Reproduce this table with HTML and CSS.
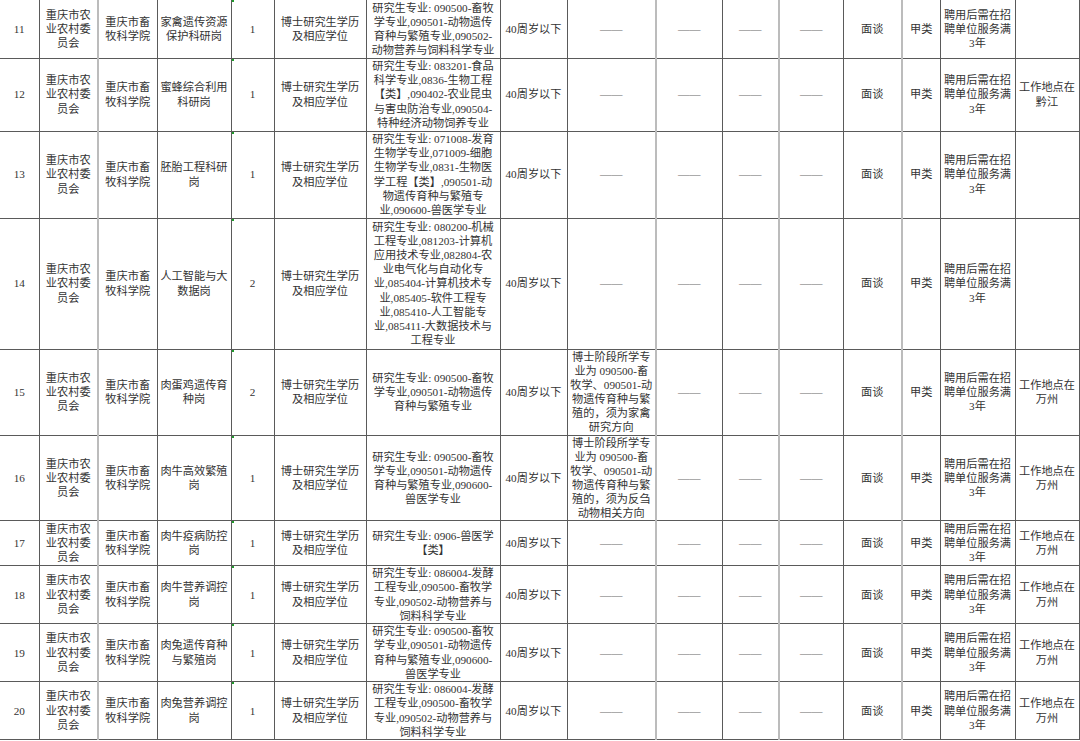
FILE: index.html
```html
<!DOCTYPE html>
<html lang="zh-CN">
<head>
<meta charset="utf-8">
<title>岗位表</title>
<link rel="stylesheet" href="styles.css">
</head>
<body>
<table class="sheet">
<colgroup>
<col class="w39"><col class="w59"><col class="w59"><col class="w74"><col class="w43"><col class="w92"><col class="w134"><col class="w67"><col class="w89"><col class="w66"><col class="w57"><col class="w64"><col class="w59"><col class="w38"><col class="w75"><col class="w64">
</colgroup>
<tbody>
<tr class="h58">
<td>11</td><td>重庆市农<br>业农村委<br>员会</td><td class="g">重庆市畜<br>牧科学院</td><td>家禽遗传资源<br>保护科研岗</td><td class="mk">1</td><td>博士研究生学历<br>及相应学位</td>
<td>研究生专业: 090500-畜牧<br>学专业,090501-动物遗传<br>育种与繁殖专业,090502-<br>动物营养与饲料科学专业</td>
<td>40周岁以下</td><td class="d">——</td><td class="g d">——</td><td class="d">——</td><td class="g d">——</td><td>面谈</td><td class="g">甲类</td><td>聘用后需在招<br>聘单位服务满<br>3年</td><td></td>
</tr>
<tr class="h73">
<td>12</td><td>重庆市农<br>业农村委<br>员会</td><td class="g">重庆市畜<br>牧科学院</td><td>蜜蜂综合利用<br>科研岗</td><td class="mk">1</td><td>博士研究生学历<br>及相应学位</td>
<td>研究生专业: 083201-食品<br>科学专业,0836-生物工程<br>【类】,090402-农业昆虫<br>与害虫防治专业,090504-<br>特种经济动物饲养专业</td>
<td>40周岁以下</td><td class="d">——</td><td class="g d">——</td><td class="d">——</td><td class="g d">——</td><td>面谈</td><td class="g">甲类</td><td>聘用后需在招<br>聘单位服务满<br>3年</td><td>工作地点在<br>黔江</td>
</tr>
<tr class="h87">
<td>13</td><td>重庆市农<br>业农村委<br>员会</td><td class="g">重庆市畜<br>牧科学院</td><td>胚胎工程科研<br>岗</td><td class="mk">1</td><td>博士研究生学历<br>及相应学位</td>
<td>研究生专业: 071008-发育<br>生物学专业,071009-细胞<br>生物学专业,0831-生物医<br>学工程【类】,090501-动<br>物遗传育种与繁殖专<br>业,090600-兽医学专业</td>
<td>40周岁以下</td><td class="d">——</td><td class="g d">——</td><td class="d">——</td><td class="g d">——</td><td>面谈</td><td class="g">甲类</td><td>聘用后需在招<br>聘单位服务满<br>3年</td><td></td>
</tr>
<tr class="h131">
<td>14</td><td>重庆市农<br>业农村委<br>员会</td><td class="g">重庆市畜<br>牧科学院</td><td>人工智能与大<br>数据岗</td><td class="mk">2</td><td>博士研究生学历<br>及相应学位</td>
<td>研究生专业: 080200-机械<br>工程专业,081203-计算机<br>应用技术专业,082804-农<br>业电气化与自动化专<br>业,085404-计算机技术专<br>业,085405-软件工程专<br>业,085410-人工智能专<br>业,085411-大数据技术与<br>工程专业</td>
<td>40周岁以下</td><td class="d">——</td><td class="g d">——</td><td class="d">——</td><td class="g d">——</td><td>面谈</td><td class="g">甲类</td><td>聘用后需在招<br>聘单位服务满<br>3年</td><td></td>
</tr>
<tr class="h86">
<td>15</td><td>重庆市农<br>业农村委<br>员会</td><td class="g">重庆市畜<br>牧科学院</td><td>肉蛋鸡遗传育<br>种岗</td><td class="mk">2</td><td>博士研究生学历<br>及相应学位</td>
<td>研究生专业: 090500-畜牧<br>学专业,090501-动物遗传<br>育种与繁殖专业</td>
<td>40周岁以下</td><td>博士阶段所学专<br>业为 090500-畜<br>牧学、090501-动<br>物遗传育种与繁<br>殖的，须为家禽<br>研究方向</td><td class="g d">——</td><td class="d">——</td><td class="g d">——</td><td>面谈</td><td class="g">甲类</td><td>聘用后需在招<br>聘单位服务满<br>3年</td><td>工作地点在<br>万州</td>
</tr>
<tr class="h85">
<td>16</td><td>重庆市农<br>业农村委<br>员会</td><td class="g">重庆市畜<br>牧科学院</td><td>肉牛高效繁殖<br>岗</td><td class="mk">1</td><td>博士研究生学历<br>及相应学位</td>
<td>研究生专业: 090500-畜牧<br>学专业,090501-动物遗传<br>育种与繁殖专业,090600-<br>兽医学专业</td>
<td>40周岁以下</td><td>博士阶段所学专<br>业为 090500-畜<br>牧学、090501-动<br>物遗传育种与繁<br>殖的，须为反刍<br>动物相关方向</td><td class="g d">——</td><td class="d">——</td><td class="g d">——</td><td>面谈</td><td class="g">甲类</td><td>聘用后需在招<br>聘单位服务满<br>3年</td><td>工作地点在<br>万州</td>
</tr>
<tr class="h45">
<td>17</td><td>重庆市农<br>业农村委<br>员会</td><td class="g">重庆市畜<br>牧科学院</td><td>肉牛疫病防控<br>岗</td><td class="mk">1</td><td>博士研究生学历<br>及相应学位</td>
<td>研究生专业: 0906-兽医学<br>【类】</td>
<td>40周岁以下</td><td class="d">——</td><td class="g d">——</td><td class="d">——</td><td class="g d">——</td><td>面谈</td><td class="g">甲类</td><td>聘用后需在招<br>聘单位服务满<br>3年</td><td>工作地点在<br>万州</td>
</tr>
<tr class="h58">
<td>18</td><td>重庆市农<br>业农村委<br>员会</td><td class="g">重庆市畜<br>牧科学院</td><td>肉牛营养调控<br>岗</td><td class="mk">1</td><td>博士研究生学历<br>及相应学位</td>
<td>研究生专业: 086004-发酵<br>工程专业,090500-畜牧学<br>专业,090502-动物营养与<br>饲料科学专业</td>
<td>40周岁以下</td><td class="d">——</td><td class="g d">——</td><td class="d">——</td><td class="g d">——</td><td>面谈</td><td class="g">甲类</td><td>聘用后需在招<br>聘单位服务满<br>3年</td><td>工作地点在<br>万州</td>
</tr>
<tr class="h58">
<td>19</td><td>重庆市农<br>业农村委<br>员会</td><td class="g">重庆市畜<br>牧科学院</td><td>肉兔遗传育种<br>与繁殖岗</td><td class="mk">1</td><td>博士研究生学历<br>及相应学位</td>
<td>研究生专业: 090500-畜牧<br>学专业,090501-动物遗传<br>育种与繁殖专业,090600-<br>兽医学专业</td>
<td>40周岁以下</td><td class="d">——</td><td class="g d">——</td><td class="d">——</td><td class="g d">——</td><td>面谈</td><td class="g">甲类</td><td>聘用后需在招<br>聘单位服务满<br>3年</td><td>工作地点在<br>万州</td>
</tr>
<tr class="h58">
<td>20</td><td>重庆市农<br>业农村委<br>员会</td><td class="g">重庆市畜<br>牧科学院</td><td>肉兔营养调控<br>岗</td><td class="mk">1</td><td>博士研究生学历<br>及相应学位</td>
<td>研究生专业: 086004-发酵<br>工程专业,090500-畜牧学<br>专业,090502-动物营养与<br>饲料科学专业</td>
<td>40周岁以下</td><td class="d">——</td><td class="g d">——</td><td class="d">——</td><td class="g d">——</td><td>面谈</td><td class="g">甲类</td><td>聘用后需在招<br>聘单位服务满<br>3年</td><td>工作地点在<br>万州</td>
</tr>
</tbody>
</table>
</body>
</html>
```
FILE: styles.css
```css
html, body {
  margin: 0;
  padding: 0;
  background: #ffffff;
  overflow: hidden;
}

.sheet {
  border-collapse: collapse;
  table-layout: fixed;
  width: 1079px;
  font-family: "Liberation Serif", "Noto Sans CJK SC", serif;
  font-size: 11.2px;
  line-height: 14.1px;
  color: #333333;
}

.sheet td {
  border: 1px solid #5a5a5a;
  padding: 0 1px;
  text-align: center;
  vertical-align: middle;
  white-space: nowrap;
  overflow: hidden;
  position: relative;
}

.sheet tr:first-child td { border-top: none; }
.sheet td:first-child { border-left: none; }

.sheet td.g { border-left: 2px solid #bcbcbc; }

.sheet td.d { color: #6a6a6a; }

.sheet td.mk::before {
  content: "";
  position: absolute;
  left: 0;
  top: 0;
  width: 2px;
  height: 2px;
  background: #1f9a2a;
}

.h45 { height: 45px; }
.h58 { height: 58px; }
.h73 { height: 73px; }
.h85 { height: 85px; }
.h86 { height: 86px; }
.h87 { height: 87px; }
.h131 { height: 131px; }

.w39 { width: 39px; }
.w43 { width: 43px; }
.w38 { width: 38px; }
.w57 { width: 57px; }
.w59 { width: 59px; }
.w64 { width: 64px; }
.w66 { width: 66px; }
.w67 { width: 67px; }
.w74 { width: 74px; }
.w75 { width: 75px; }
.w89 { width: 89px; }
.w92 { width: 92px; }
.w134 { width: 134px; }
```
